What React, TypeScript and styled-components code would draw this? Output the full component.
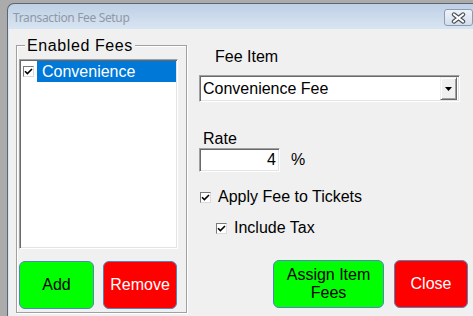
import React from "react";
import styled, { createGlobalStyle } from "styled-components";

const Global = createGlobalStyle`
  html, body { margin: 0; padding: 0; }
  body {
    background: #ababab;
    overflow: hidden;
    width: 473px;
    height: 316px;
    font-family: "Liberation Sans", Arial, sans-serif;
    font-size: 16px;
    color: #000;
  }
`;

const Window = styled.div`
  margin: 3px 0 0 7px;
  width: 466px;
  height: 313px;
  border: 1px solid #5e6570;
  border-right: none;
  border-bottom: none;
  border-top-left-radius: 7px;
  background: linear-gradient(#bfd0e5, #d9e5f2 26px, #d9e5f2);
  padding-left: 1px;
  box-sizing: border-box;
  display: flex;
  flex-direction: column;
`;

const TitleBar = styled.div`
  height: 25px;
  display: flex;
  align-items: center;
  padding: 0 0 0 4px;
  width: 464px;
  box-sizing: border-box;
`;

const TitleText = styled.div`
  font-family: "Noto Sans", "Open Sans", sans-serif;
  font-size: 12px;
  color: #8f99a5;
  letter-spacing: -0.35px;
  flex: 1;
  margin-top: 1px;
`;

const CloseBtn = styled.div`
  width: 29px;
  height: 17px;
  box-sizing: border-box;
  border: 1px solid #8d9cb3;
  border-radius: 3px;
  background: linear-gradient(#eef3f9, #d3deec);
  display: flex;
  align-items: center;
  justify-content: center;
  margin-top: 2px;
`;

const Client = styled.div`
  flex: 1;
  background: #f0f0f0;
  display: flex;
  align-items: flex-start;
  padding: 16px 0 0 7px;
  overflow: hidden;
`;

const GroupBox = styled.div`
  position: relative;
  width: 171px;
  height: 268px;
  box-sizing: border-box;
  border: 1px solid #a0a0a0;
  box-shadow: 1px 1px 0 #fff, inset 1px 1px 0 #fff;
  padding: 13px 0 0 2px;
  display: flex;
  flex-direction: column;
  margin-right: 12px;
  flex-shrink: 0;
`;

const Legend = styled.div`
  position: absolute;
  top: -9px;
  left: 8px;
  padding: 0 2px;
  background: #f0f0f0;
  line-height: 18px;
  letter-spacing: 0.6px;
`;

const sunken = `
  border: 1px solid;
  border-color: #a0a0a0 #ffffff #ffffff #a0a0a0;
  box-shadow: inset 1px 1px 0 #696969, inset -1px -1px 0 #e3e3e3;
  background: #fff;
  box-sizing: border-box;
`;

const ListBox = styled.div`
  ${sunken}
  width: 159px;
  height: 190px;
  padding: 1px 0 0 1px;
`;

const ListItem = styled.div`
  display: flex;
  align-items: center;
  height: 21px;
  padding-left: 2px;
`;

const Selection = styled.div`
  flex: 1;
  margin-left: 3px;
  margin-right: 1px;
  height: 21px;
  line-height: 21px;
  background: #0078d7;
  color: #fff;
  padding-left: 5px;
`;

const ButtonRow = styled.div<{ $gap: number; $top: number; $indent?: number }>`
  display: flex;
  gap: ${(p) => p.$gap}px;
  margin-top: ${(p) => p.$top}px;
  padding-left: ${(p) => p.$indent ?? 0}px;
`;

const ColorButton = styled.div<{ $bg: string; $fg: string; $w: number }>`
  width: ${(p) => p.$w}px;
  height: 48px;
  box-sizing: border-box;
  border: 1px solid #4f86bd;
  border-radius: 6px;
  background: ${(p) => p.$bg};
  color: ${(p) => p.$fg};
  display: flex;
  align-items: center;
  justify-content: center;
  text-align: center;
  line-height: 18px;
  flex-shrink: 0;
`;

const RightCol = styled.div`
  display: flex;
  flex-direction: column;
  width: 274px;
  flex-shrink: 0;
`;

const Label = styled.div<{ $indent: number; $top: number }>`
  line-height: 18px;
  padding-left: ${(p) => p.$indent}px;
  margin-top: ${(p) => p.$top}px;
`;

const Combo = styled.div`
  ${sunken}
  margin-top: 9px;
  width: 261px;
  height: 27px;
  display: flex;
  align-items: center;
  padding: 2px 2px 2px 3px;
`;

const ComboText = styled.div`
  flex: 1;
  line-height: 18px;
`;

const DropBtn = styled.div`
  width: 17px;
  height: 23px;
  box-sizing: border-box;
  background: #f0f0f0;
  border: 1px solid;
  border-color: #f0f0f0 #696969 #696969 #f0f0f0;
  box-shadow: inset 1px 1px 0 #fff, inset -1px -1px 0 #a0a0a0;
  display: flex;
  align-items: center;
  justify-content: center;
`;

const RateRow = styled.div`
  display: flex;
  align-items: center;
  gap: 11px;
`;

const RateInput = styled.div`
  ${sunken}
  width: 81px;
  height: 24px;
  text-align: right;
  padding-right: 3px;
  line-height: 22px;
`;

const CheckRow = styled.div<{ $indent: number; $top: number }>`
  display: flex;
  align-items: center;
  gap: 7px;
  padding-left: ${(p) => p.$indent}px;
  margin-top: ${(p) => p.$top}px;
  line-height: 18px;
`;

const Box = styled.div<{ $size: number }>`
  width: ${(p) => p.$size}px;
  height: ${(p) => p.$size}px;
  box-sizing: border-box;
  border: 1px solid;
  border-color: #7a7a7a #dcdcdc #dcdcdc #7a7a7a;
  background: #fff;
  display: flex;
  align-items: center;
  justify-content: center;
  flex-shrink: 0;
`;

const Check = ({ size }: { size: number }) => (
  <Box $size={size}>
    <svg width={size - 2} height={size - 2} viewBox="0 0 9 9">
      <path d="M1 4.2 L3.4 6.6 L8 2" fill="none" stroke="#000" strokeWidth="1.6" />
    </svg>
  </Box>
);

export default function App() {
  return (
    <>
      <Global />
      <Window>
        <TitleBar>
          <TitleText>Transaction Fee Setup</TitleText>
          <CloseBtn>
            <svg width="15" height="12" viewBox="0 0 15 12">
              <path d="M3 2.5 L12 9.5 M12 2.5 L3 9.5" stroke="#4a4f57" strokeWidth="4.4" strokeLinecap="round" />
              <path d="M3 2.5 L12 9.5 M12 2.5 L3 9.5" stroke="#fff" strokeWidth="2.2" strokeLinecap="round" />
            </svg>
          </CloseBtn>
        </TitleBar>
        <Client>
          <GroupBox>
            <Legend>Enabled Fees</Legend>
            <ListBox>
              <ListItem>
                <Check size={11} />
                <Selection>Convenience</Selection>
              </ListItem>
            </ListBox>
            <ButtonRow $gap={9} $top={12}>
              <ColorButton $bg="#00ff00" $fg="#000" $w={75}>Add</ColorButton>
              <ColorButton $bg="#ff0000" $fg="#fff" $w={74}>Remove</ColorButton>
            </ButtonRow>
          </GroupBox>
          <RightCol>
            <Label $indent={16} $top={3}>Fee Item</Label>
            <Combo>
              <ComboText>Convenience Fee</ComboText>
              <DropBtn>
                <svg width="7" height="4" viewBox="0 0 7 4">
                  <path d="M0 0 H7 L3.5 4 Z" fill="#000" />
                </svg>
              </DropBtn>
            </Combo>
            <Label $indent={4} $top={28}>Rate</Label>
            <RateRow>
              <RateInput>4</RateInput>
              <span>%</span>
            </RateRow>
            <CheckRow $indent={1} $top={16}>
              <Check size={11} />
              <span>Apply Fee to Tickets</span>
            </CheckRow>
            <CheckRow $indent={17} $top={13}>
              <Check size={11} />
              <span>Include Tax</span>
            </CheckRow>
            <ButtonRow $gap={10} $top={23} $indent={74}>
              <ColorButton $bg="#00ff00" $fg="#000" $w={111}>Assign Item<br />Fees</ColorButton>
              <ColorButton $bg="#ff0000" $fg="#fff" $w={74}>Close</ColorButton>
            </ButtonRow>
          </RightCol>
        </Client>
      </Window>
    </>
  );
}
